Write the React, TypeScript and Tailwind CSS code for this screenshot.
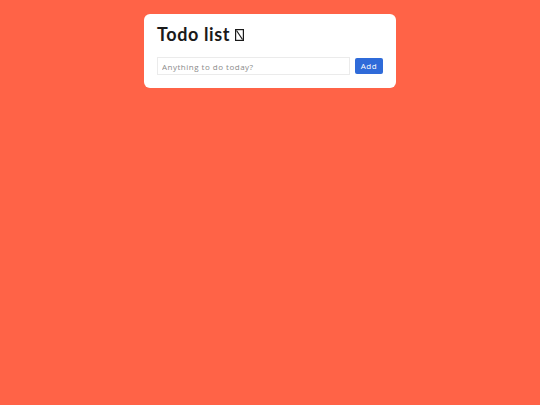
import { useState } from 'react';

export default function App() {
  const [text, setText] = useState('');
  const [todos, setTodos] = useState<string[]>([]);

  const addTodo = () => {
    if (!text.trim()) return;
    setTodos([...todos, text.trim()]);
    setText('');
  };

  return (
    <div className="min-h-[405px] w-full bg-[#ff6347] pt-[14px] font-['Lato',sans-serif]">
      <div className="mx-auto w-[252px] rounded-[6px] bg-white px-[13px] pt-[8px] pb-[13px]">
        <h1 className="flex items-center text-[18px] font-bold leading-[24px] tracking-[0.6px] text-[#1a1a1a]">
          Todo list
          {/* missing-glyph box, as the emoji renders in the reference */}
          <svg className="ml-[5px] mt-[2px]" width="9" height="12" viewBox="0 0 9 12" fill="none" stroke="#1a1a1a" strokeWidth="1.2">
            <rect x="0.6" y="0.6" width="7.8" height="10.8" />
            <path d="M1.5 1.5 L7.5 10.5" />
          </svg>
        </h1>
        <div className="mt-[11px] flex items-center gap-[5px]">
          <input
            value={text}
            onChange={(e) => setText(e.target.value)}
            placeholder="Anything to do today?"
            className="h-[18px] flex-1 border border-[#ebebeb] px-[4px] font-['Open_Sans',sans-serif] text-[8px] font-normal tracking-[0.5px] text-[#333] outline-none placeholder:text-[#8a8a8a]"
          />
          <button
            onClick={addTodo}
            className="h-[16px] w-[28px] rounded-[2px] bg-[#2f6bd9] font-['Open_Sans',sans-serif] text-[8px] font-normal tracking-[0.5px] text-white"
          >
            Add
          </button>
        </div>
        {todos.length > 0 && (
          <ul className="mt-2 text-[9px]">
            {todos.map((t, i) => (
              <li key={i}>{t}</li>
            ))}
          </ul>
        )}
      </div>
    </div>
  );
}
